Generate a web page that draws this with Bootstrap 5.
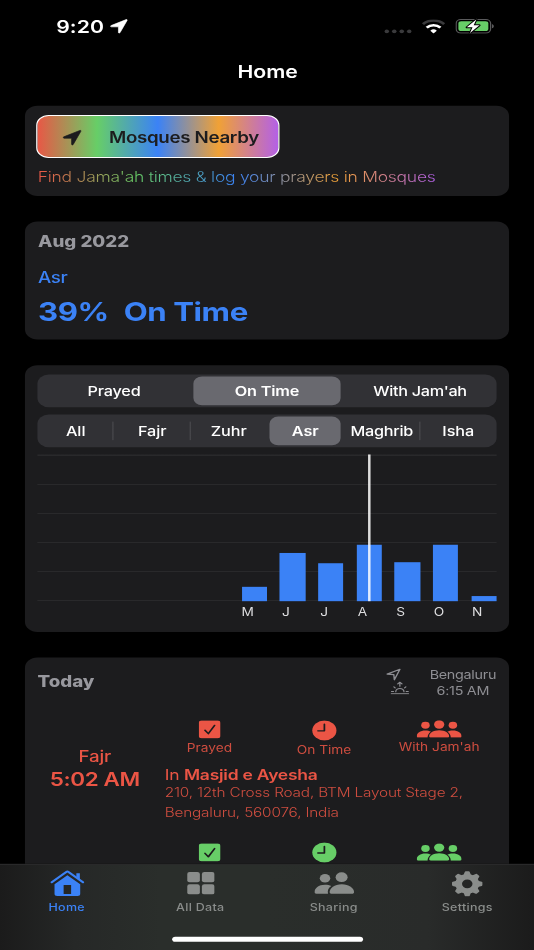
<!DOCTYPE html>
<html lang="en">
<head>
<meta charset="utf-8">
<meta name="viewport" content="width=device-width, initial-scale=1">
<title>Home</title>
<link rel="stylesheet" href="https://cdn.jsdelivr.net/npm/bootstrap@5.3.0/dist/css/bootstrap.min.css">
<style>
:root{--red:#eb5545;--green:#67ce67;--blue:#3b82f6;--orange:#f0a136;--purple:#b25fea;--dim:#98989e}
html,body{width:534px;height:950px;overflow:hidden;background:#000}
body{font-family:Inter,"Liberation Sans",sans-serif;color:#fff}
/* 428 x 926 point screen stretched over the window */
.screen{width:428px;height:926px;transform:scale(1.24766,1.02592);transform-origin:0 0;background:#000}
svg{display:block;flex:none}
.t{white-space:nowrap}
.status{height:47px;padding:4.6px 32px 0 45px}
.clock-text{font-size:17px;font-weight:600;line-height:42px;letter-spacing:.1px}
.titlebar{height:44px;font-size:17px;font-weight:600;line-height:46px;padding-left:1px}
.feed{padding:12.4px 20px 0;gap:24.5px}
.panel{background:#1c1c1e;border-radius:10px;flex:none}
.rainbow{background:linear-gradient(90deg,var(--red),var(--green) 25%,var(--blue) 50%,var(--orange) 75%,var(--purple))}
.p-near{height:88.2px;padding:9.4px 9.4px 0}
.near-btn{width:194.5px;height:42px;border:1px solid #fff;border-radius:10px;color:#1c1c1e;font-size:15px;font-weight:600;line-height:40px;letter-spacing:-.26px;padding:.8px 0 0 20px;gap:21px;background-origin:border-box}
.near-note{font-size:14px;line-height:20px;letter-spacing:-.2px;margin:7.6px 0 0 .8px;width:320px;-webkit-background-clip:text;background-clip:text;color:transparent;font-weight:300}
.p-month{height:115.6px;padding:10.3px 10.5px 0}
.head15{font-size:15px;font-weight:800;line-height:20px;color:var(--dim)}
.month-name{font-size:15px;font-weight:500;line-height:20px;margin-top:15px;color:var(--blue);letter-spacing:-.35px}
.month-val{font-size:25px;font-weight:700;line-height:34px;margin-top:5.6px;color:var(--blue);letter-spacing:-.36px}
.p-chart{height:260.4px;padding:9.7px 10px 0}
.segs{height:31.8px;background:#313135;border-radius:9px;padding:2px 0;margin-bottom:7.2px;font-size:13px;font-weight:500;line-height:27.8px;letter-spacing:-.14px}
.segs>div{flex:1 1 0;text-align:center;white-space:nowrap;display:flex;justify-content:center;align-items:center;padding-top:1.6px}
.segs .on{background:#69696f;border-radius:7px;font-weight:600;margin:0 2px;flex:0 0 calc(100%/3 - 4px)}
.segs.six .on{flex-basis:calc(100%/6 - 4px)}
.segs .div-r{background:linear-gradient(#48484c,#48484c) right 50%/1px 18px no-repeat}
.segs.six{letter-spacing:-.05px}
.segs .tight{letter-spacing:-.24px}
.plot{height:142.8px;background:repeating-linear-gradient(#29292b 0 1px,transparent 1px 28.36px)}
.plot>div{flex:1 1 0;display:flex;align-items:flex-end;justify-content:flex-end}
.bar{width:66.7%;background:var(--blue)}
.rule{left:264.6px;top:0;width:2px;height:142.8px;background:rgba(255,255,255,.85)}
.axis{font-size:11px;line-height:20px;color:#dedee0}
.axis>div{flex:1 1 0;text-align:center;padding-right:.5px}
.p-today{height:300px;padding:0 10px}
.today-head{height:46px;padding-top:14.7px}
.place{font-size:11.5px;line-height:15px;color:#8e8e93;margin-top:-4px;width:54px;text-align:center;letter-spacing:-.22px}
.glyphs{color:#8e8e93;margin:-4px 15.6px 0 0}
.prayer{height:118.9px}
.who{width:92px;padding-top:41.2px;text-align:center}
.who .n{font-size:15px;line-height:20px;font-weight:500;letter-spacing:-.13px}
.who .h{font-size:18px;line-height:24px;font-weight:600;letter-spacing:-.3px}
.marks>div{width:91.8px;font-size:11px;line-height:14px;display:flex;flex-direction:column;align-items:center;height:45px;padding-top:15px}
.marks>div:last-child{padding-left:1px}
.mk{height:20px;display:flex;align-items:center;margin-bottom:1.9px}
.c-red{color:var(--red)}.c-green{color:var(--green)}
.soft{opacity:.86}
.mosque{font-size:14px;line-height:20px;padding-left:10px;margin-top:13.2px;letter-spacing:-.18px}
.addr{font-size:12.3px;line-height:18.1px;padding-left:10px;margin-top:-.4px;font-weight:300;letter-spacing:-.14px}
.tabs{height:83.8px;flex:none;border-top:1px solid #303032;background:linear-gradient(90deg,#1b1b1b,#262827 14%,#2a2e2b 30%,#2a2e2b 50%,#292b2a 80%,#1b1b1b)}
.tabs .tab{flex:1 1 0;height:70px;color:#8a8d8b;font-size:10px;font-weight:500;line-height:12px;padding-top:4.6px;letter-spacing:.24px}
.tab .ic{height:27px;display:flex;align-items:center;margin-bottom:3.2px}
.tab.now{color:var(--blue)}
.pill{width:153px;height:5px;border-radius:3px;background:#fff}
</style>
</head>
<body>
<svg width="0" height="0" class="position-absolute">
<symbol id="arrow" viewBox="0 0 16 16"><path d="M1.1 7.4 14 1.2c.6-.3 1.1.2.8.8L8.7 14.8c-.4.8-1.3.6-1.3-.2V8.7H1.4c-.8 0-1-.9-.3-1.3z" fill="currentColor" stroke="currentColor" stroke-width=".6"/></symbol>
<symbol id="check" viewBox="0 0 18 18"><path d="M2.6.2h12.8a2.2 2.2 0 0 1 2.2 2.2v13a2.2 2.2 0 0 1-2.2 2.2H2.6a2.2 2.2 0 0 1-2.2-2.2v-13A2.2 2.2 0 0 1 2.6.2z" fill="currentColor"/><path d="m5.3 9.8 2.7 3.3 5-8" fill="none" stroke="#1c1c1e" stroke-width="1.4" stroke-linecap="round" stroke-linejoin="round"/></symbol>
<symbol id="clock" viewBox="0 0 20 20"><circle cx="10" cy="10" r="9.7" fill="currentColor"/><path d="M10 4v6.4H4.8" fill="none" stroke="#1c1c1e" stroke-width="1.4" stroke-linecap="round" stroke-linejoin="round"/></symbol>
<symbol id="three" viewBox="0 0 36 17"><g fill="currentColor"><circle cx="7" cy="5" r="3.4"/><circle cx="29" cy="5" r="3.4"/><path d="M0 15.6C0 12.6 2.8 10 7 10c1.7 0 3.2.4 4.4 1.2C9.700 12.500 8.700 14.200 8.700 16.900H1.300c-.9 0-1.300-.5-1.300-1.300zM36 15.600C36 12.600 33.200 10 29 10c-1.700 0-3.200.4-4.400 1.200 1.700 1.300 2.700 3 2.700 5.700h7.400c.9 0 1.300-.5 1.300-1.300z"/><circle cx="18" cy="4.200" r="4.100"/><path d="M10 15.600C10 12.600 13.200 9.800 18 9.800s8 2.800 8 5.800c0 .9-.5 1.300-1.400 1.300H11.400c-.9 0-1.400-.4-1.400-1.300z"/></g></symbol>
</svg>
<div class="screen d-flex flex-column overflow-hidden">
  <div class="status d-flex align-items-center">
    <span class="t clock-text">9:20</span>
    <svg class="ms-1" width="15" height="15"><use href="#arrow"/></svg>
    <div class="d-flex align-items-center ms-auto">
      <svg width="22" height="14" viewBox="0 0 22 14" fill="#3a3a3c"><circle cx="2" cy="11.500" r="1.800"/><circle cx="8" cy="11.500" r="1.800"/><circle cx="14" cy="11.500" r="1.800"/><circle cx="20" cy="11.500" r="1.800"/></svg>
      <svg class="mx-2" width="19" height="14" viewBox="0 0 19 14" fill="none"><path d="M1 4.600a12 12 0 0 1 17 0" stroke="#3a3a3c" stroke-width="2.400"/><path d="M4 7.900a7.800 7.800 0 0 1 11 0" stroke="#fff" stroke-width="2.400"/><path d="m9.500 13.600-2.600-2.700a3.700 3.700 0 0 1 5.200 0z" fill="#fff"/></svg>
      <svg width="31" height="15" viewBox="0 0 31 15"><rect x=".6" y=".9" width="27.600" height="13.200" rx="3.800" fill="none" stroke="#5a5a5c"/><rect x="2.400" y="2.700" width="24" height="9.600" rx="2.300" fill="#67ce67"/><path d="M29.300 5.400v4.200c1-.4 1.500-1.200 1.500-2.100s-.5-1.700-1.500-2.100z" fill="#5a5a5c"/><path d="M16.600.4 8.800 8.300c-.3.400-.1.800.3.800h4l-2 5.300c-.2.600.3.800.7.400l7.800-7.800c.3-.4.1-.8-.3-.8h-4L17.300.9c.2-.6-.3-.9-.7-.5z" fill="#fff" stroke="#000" stroke-width=".9"/></svg>
    </div>
  </div>
  <div class="titlebar text-center"><span class="t">Home</span></div>
  <main class="feed d-flex flex-column flex-grow-1 overflow-hidden">
    <section class="panel p-near">
      <button class="near-btn rainbow d-flex align-items-center"><svg width="16" height="16"><use href="#arrow"/></svg><span class="t">Mosques Nearby</span></button>
      <div class="near-note rainbow"><span class="t">Find Jama'ah times &amp; log your prayers in Mosques</span></div>
    </section>
    <section class="panel p-month">
      <div class="head15"><span class="t">Aug 2022</span></div>
      <div class="month-name"><span class="t">Asr</span></div>
      <div class="month-val d-flex"><span class="t">39%</span><span class="t ms-2 ps-1">On Time</span></div>
    </section>
    <section class="panel p-chart">
      <div class="segs d-flex"><div>Prayed</div><div class="on">On Time</div><div class="tight">With Jam'ah</div></div>
      <div class="segs six d-flex"><div class="div-r">All</div><div class="div-r">Fajr</div><div>Zuhr</div><div class="on">Asr</div><div class="div-r tight">Maghrib</div><div>Isha</div></div>
      <div class="plot d-flex position-relative">
        <div></div><div></div><div></div><div></div><div></div>
        <div><i class="bar" style="height:9.8%"></i></div><div><i class="bar" style="height:33.4%"></i></div><div><i class="bar" style="height:26%"></i></div><div><i class="bar" style="height:38.8%"></i></div><div><i class="bar" style="height:26.8%"></i></div><div><i class="bar" style="height:38.8%"></i></div><div><i class="bar" style="height:3.4%"></i></div>
        <span class="rule position-absolute"></span>
      </div>
      <div class="axis d-flex"><div></div><div></div><div></div><div></div><div></div><div>M</div><div>J</div><div>J</div><div>A</div><div>S</div><div>O</div><div>N</div></div>
    </section>
    <section class="panel p-today">
      <div class="today-head d-flex">
        <div class="head15"><span class="t">Today</span></div>
        <div class="glyphs ms-auto d-flex flex-column">
          <svg width="13" height="13" viewBox="0 0 16 16"><path d="M1.600 7.500 14.200 1.700 8.700 14.300 8.200 8.100z" fill="none" stroke="currentColor" stroke-width="1.400" stroke-linejoin="round"/></svg>
          <svg class="ms-1" width="15" height="13" viewBox="0 0 15 13" fill="none" stroke="currentColor" stroke-width="1" stroke-linecap="round"><path d="M.5 12.300h14M.8 10h1.600M12.600 10h1.600M4.200 10.300a3.300 3.300 0 0 1 6.600 0M2.700 5.500l1 1M12.300 5.500l-1 1M7.500 5V1.200M5.800 2.700l1.700-1.700 1.700 1.700"/></svg>
        </div>
        <div class="place"><span class="t">Bengaluru</span><br><span class="t">6:15 AM</span></div>
      </div>
      <div class="prayer d-flex c-red">
        <div class="who"><div class="n">Fajr</div><div class="h">5:02 AM</div></div>
        <div>
          <div class="marks d-flex"><div><span class="mk"><svg width="18" height="18"><use href="#check"/></svg></span><span class="t soft">Prayed</span></div><div><span class="mk"><svg width="20" height="20"><use href="#clock"/></svg></span><span class="t soft">On Time</span></div><div><span class="mk"><svg width="36" height="17"><use href="#three"/></svg></span><span class="t soft">With Jam'ah</span></div></div>
          <div class="mosque"><span class="t">In <b class="fw-semibold">Masjid e Ayesha</b></span></div>
          <div class="addr soft"><span class="t">210, 12th Cross Road, BTM Layout Stage 2,</span><br><span class="t">Bengaluru, 560076, India</span></div>
        </div>
      </div>
      <div class="prayer d-flex c-green">
        <div class="who"></div>
        <div class="marks d-flex"><div><span class="mk"><svg width="18" height="18"><use href="#check"/></svg></span></div><div><span class="mk"><svg width="20" height="20"><use href="#clock"/></svg></span></div><div><span class="mk"><svg width="36" height="17"><use href="#three"/></svg></span></div></div>
      </div>
    </section>
  </main>
  <nav class="tabs d-flex flex-column align-items-center">
    <div class="d-flex w-100">
      <div class="tab now d-flex flex-column align-items-center"><div class="ic"><svg width="28" height="27" viewBox="0 0 28 27"><path d="M1.500 12 13.100 1.900a1.400 1.400 0 0 1 1.800 0L26.500 12" fill="none" stroke="currentColor" stroke-width="1.900" stroke-linecap="round"/><path d="M21.200 3.200h2.800v6.200l-2.800-2.400z" fill="currentColor"/><path fill-rule="evenodd" d="M14 5.200 24.300 14v9.200a2.200 2.200 0 0 1-2.200 2.200H5.900a2.200 2.200 0 0 1-2.200-2.200V14zM11 14.700v8.800h6v-8.800z" fill="currentColor"/></svg></div><span class="t">Home</span></div>
      <div class="tab d-flex flex-column align-items-center"><div class="ic"><svg width="22" height="22" viewBox="0 0 22 22" fill="currentColor"><rect width="10.200" height="10" rx="2"/><rect x="11.800" width="10.200" height="10" rx="2"/><rect y="12" width="10.200" height="10" rx="2"/><rect x="11.800" y="12" width="10.200" height="10" rx="2"/></svg></div><span class="t">All Data</span></div>
      <div class="tab d-flex flex-column align-items-center"><div class="ic"><svg width="32" height="22" viewBox="0 0 32 22" fill="currentColor"><circle cx="8.500" cy="6" r="4.200"/><circle cx="21.800" cy="5" r="4.800"/><path d="M0 19.500C0 15.800 3.400 12.300 8.500 12.300c2 0 3.700.5 5 1.300-2.200 1.800-3.200 4.200-2.600 7.600H1.600C.6 21.200 0 20.500 0 19.500z"/><path d="M12.200 19.500c0-3.700 3.800-7.700 9.700-7.700s9.900 4 9.900 7.700c0 1.100-.6 1.700-1.700 1.700H13.900c-1.100 0-1.700-.6-1.700-1.700z"/></svg></div><span class="t">Sharing</span></div>
      <div class="tab d-flex flex-column align-items-center"><div class="ic"><svg width="25" height="25" viewBox="-12.500 -12.500 25 25"><g fill="currentColor"><path fill-rule="evenodd" d="M0-9.600A9.600 9.600 0 1 1 0 9.600 9.600 9.600 0 1 1 0-9.600zM0-4.200A4.200 4.200 0 1 0 0 4.200 4.200 4.200 0 1 0 0-4.200z"/><path id="tooth" d="M-3-8.500-2-11.600q.2-.6.8-.6h2.400q.6 0 .8.600l1 3.100zM-3 8.500-2 11.600q.2.600.8.600h2.400q.6 0 .8-.6l1-3.100z"/><use href="#tooth" transform="rotate(45)"/><use href="#tooth" transform="rotate(90)"/><use href="#tooth" transform="rotate(135)"/></g></svg></div><span class="t">Settings</span></div>
    </div>
    <div class="pill"></div>
  </nav>
</div>
<script src="https://cdn.jsdelivr.net/npm/bootstrap@5.3.0/dist/js/bootstrap.bundle.min.js"></script>
</body>
</html>
